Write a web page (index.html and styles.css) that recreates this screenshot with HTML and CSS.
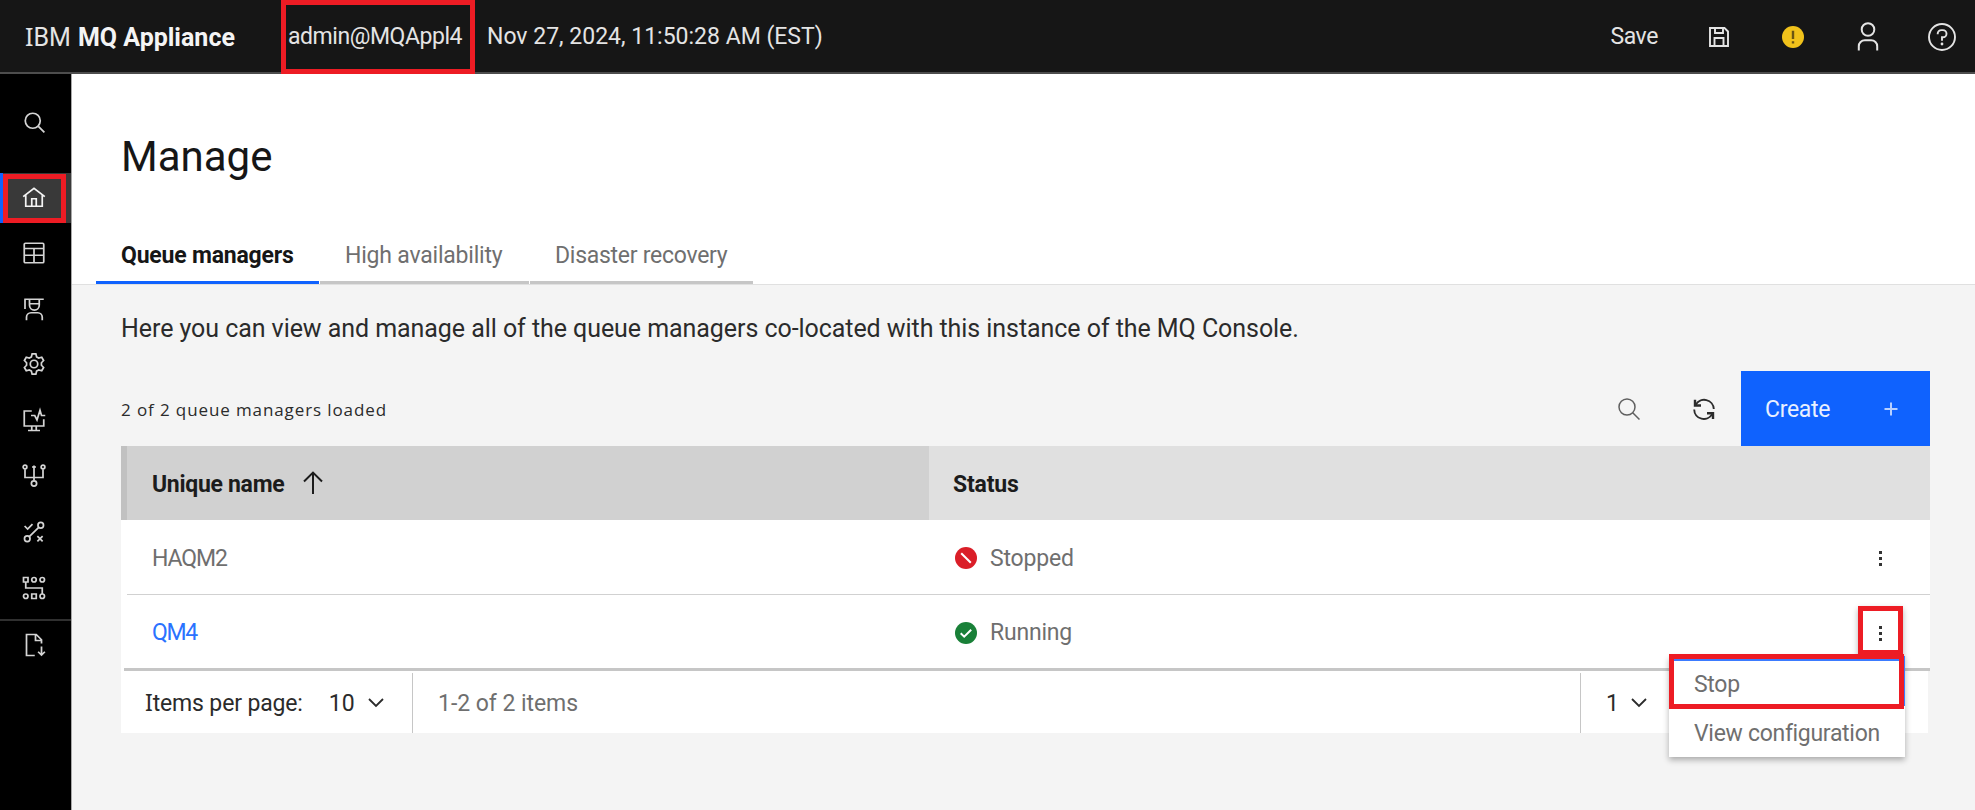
FILE: index.html
```html
<!DOCTYPE html>
<html lang="en">
<head>
<meta charset="utf-8">
<title>IBM MQ Appliance - Manage</title>
<link rel="stylesheet" href="styles.css">
</head>
<body>
<header class="topbar">
  <div class="brand"><span class="brand-ibm"><span class="slab">I</span>BM</span><b>MQ Appliance</b></div>
  <div class="user">admin@MQAppl4</div>
  <div class="clock">Nov 27, 2024, 11:50:28 AM (EST)</div>
  <div class="actions">
    <span class="save">Save</span>
    <svg class="i-floppy" viewBox="0 0 20 20"><path d="M1 1h14.5L19 4.500V19H1zM6 1v5h8V1M5.500 19v-8h9v8"/></svg>
    <svg class="i-warn" viewBox="0 0 22 22"><circle cx="11" cy="11" r="11"/><path d="M11 4.700v8.300M11 15.200v2.300"/></svg>
    <svg class="i-user" viewBox="0 0 22 29"><circle cx="11" cy="7.500" r="6.300"/><path d="M1.800 28.500v-4.300a6 6 0 0 1 6-6h6.400a6 6 0 0 1 6 6v4.300"/></svg>
    <svg class="i-help" viewBox="0 0 28 28"><circle cx="14" cy="14" r="13"/><path d="M9.700 11.300v-.6a3.600 3.600 0 0 1 3.600-3.600h1.600a3.600 3.600 0 0 1 0 7.200H14v3.400"/><circle class="dot" cx="14" cy="21" r="1.400"/></svg>
  </div>
  <div class="mark mark-user"></div>
</header>
<div class="shell">
  <nav class="rail">
    <a class="rail-search"><svg viewBox="0 0 32 32"><circle cx="13" cy="13" r="10"/><path d="M20.500 20.500l8 8"/></svg></a>
    <a class="rail-item active"><svg viewBox="0 0 32 32"><path d="M1.600 14.200L16 3l14.400 11.200M5 12v15h22V12M13 27V17h6v10"/></svg><span class="mark mark-home"></span></a>
    <a class="rail-item"><svg viewBox="0 0 32 32"><rect x="3" y="3" width="26" height="26" rx="1.500"/><path d="M3 10h26M3 19h26M16 10v19"/></svg></a>
    <a class="rail-item"><svg viewBox="0 0 32 32"><path d="M3 3h26M4 3v13M10 3v8a6.500 6.500 0 0 0 13 0V3M10 9h13M6 31v-4a6 6 0 0 1 6-6h9a6 6 0 0 1 6 6v4"/></svg></a>
    <a class="rail-item"><svg viewBox="0 0 32 32"><circle cx="16" cy="16" r="5"/><path d="M13.500 2.500h5l1 4 2.800 1.600 4-1.100 2.500 4.300-2.900 3v3.400l2.900 3-2.500 4.300-4-1.100-2.800 1.600-1 4h-5l-1-4-2.800-1.600-4 1.100-2.500-4.300 2.900-3v-3.400l-2.900-3L5.700 7l4 1.100 2.800-1.600z"/></svg></a>
    <a class="rail-item"><svg viewBox="0 0 32 32"><path d="M13 4H3v20h26V15M13 24v6M19 24v6M8 30h16M12 10h5l3 6 4-13 2 7h5"/></svg></a>
    <a class="rail-item"><svg viewBox="0 0 32 32"><circle cx="4" cy="4" r="2.500"/><circle cx="28" cy="4" r="2.500"/><path d="M4 7v11h24V7M16 2v20"/><path d="M13.500 4h5"/><circle cx="16" cy="26" r="3.500"/></svg></a>
    <a class="rail-item"><svg viewBox="0 0 32 32"><circle cx="25" cy="7" r="3.700"/><circle cx="7" cy="25" r="3.700"/><path d="M9.700 22.300L22.300 9.700M3.500 8l4 4L14 5.500M20.500 21.500l7 7M27.500 21.500l-7 7"/></svg></a>
    <a class="rail-item"><svg viewBox="0 0 32 32"><path d="M2 2h6v6H2zM13 24h6v6h-6zM5 8v8h22v8"/><circle cx="16" cy="5" r="3"/><circle cx="27" cy="5" r="3"/><circle cx="5" cy="27" r="3"/><circle cx="27" cy="27" r="3"/></svg></a>
    <a class="rail-item rail-last"><svg viewBox="0 0 32 32"><path d="M17 30H6V2h13l7 7v5M18 2v8h8M26 18v11M21.500 25l4.500 4.500 4.500-4.500"/></svg></a>
  </nav>
  <main class="page">
    <section class="head">
      <h1>Manage</h1>
      <div class="tabs">
        <a class="tab tab-q selected">Queue managers</a>
        <a class="tab tab-h">High availability</a>
        <a class="tab tab-d">Disaster recovery</a>
      </div>
    </section>
    <section class="body">
      <p class="intro">Here you can view and manage all of the queue managers co-located with this instance of the MQ Console.</p>
      <div class="toolbar">
        <span class="loaded">2 of 2 queue managers loaded</span>
        <svg class="i-search" viewBox="0 0 22 22"><circle cx="9" cy="9" r="8"/><path d="M14.700 14.700l6.800 6.800"/></svg>
        <svg class="i-refresh" viewBox="0 0 22 22"><path d="M2.800 6.800A9.600 9.600 0 0 1 20.800 11M1.200 11.500A9.600 9.600 0 0 0 19.200 16"/><path class="head-arrow" d="M2 1.800V7.500H8M20 21v-5.800H14"/></svg>
        <div class="create"><span>Create</span><svg viewBox="0 0 14 14"><path d="M7 .5v13M.5 7h13"/></svg></div>
      </div>
      <div class="table">
        <div class="thead">
          <div class="th th-name">Unique name<svg viewBox="0 0 20 24"><path d="M10 23V2M1 10.500L10 1.600l9 8.900"/></svg></div>
          <div class="th th-status">Status</div>
        </div>
        <div class="row">
          <div class="c-name">HAQM2</div>
          <div class="c-status"><svg viewBox="0 0 22 22"><circle cx="11" cy="11" r="11" fill="#da1e28"/><path d="M6.200 6.200l9.600 9.600"/></svg>Stopped</div>
          <div class="dots"><i></i><i></i><i></i></div>
        </div>
        <div class="row row-last">
          <div class="c-name link">QM4</div>
          <div class="c-status"><svg viewBox="0 0 22 22"><circle cx="11" cy="11" r="11" fill="#198038"/><path d="M5.700 11.300l3.500 3.400 7-6.900"/></svg>Running</div>
          <div class="dots open"><i></i><i></i><i></i>
            <div class="mark mark-dots"></div>
            <div class="menu">
              <div class="menu-item focus">Stop</div>
              <div class="menu-item">View configuration</div>
              <div class="mark mark-stop"></div>
            </div>
          </div>
        </div>
        <div class="pager">
          <div class="per-page"><span class="per-label"><span class="slab">I</span>tems per page:</span><span class="num">10</span><svg viewBox="0 0 16 10"><path d="M1 1l7 7 7-7"/></svg></div>
          <div class="range">1-2 of 2 items</div>
          <div class="page-no"><span>1</span><svg viewBox="0 0 16 10"><path d="M1 1l7 7 7-7"/></svg></div>
        </div>
      </div>
    </section>
  </main>
</div>
</body>
</html>
```
FILE: styles.css
```css
* { box-sizing: border-box; }
body {
  margin: 0;
  width: 1975px;
  height: 810px;
  overflow: hidden;
  display: flex;
  flex-direction: column;
  font-family: Roboto, "Liberation Sans", sans-serif;
  font-size: 23px;
  color: #2b2b2b;
  background: #f4f4f4;
  white-space: nowrap;
}
svg { flex: none; fill: none; stroke: currentColor; overflow: visible; }
.slab { font-family: "Noto Sans", sans-serif; line-height: 1; }

/* red highlight frames */
.mark { position: absolute; border: 5px solid #ed1c24; z-index: 5; }

/* top bar */
.topbar {
  position: relative;
  flex: none;
  height: 74px;
  display: flex;
  align-items: center;
  padding-left: 25px;
  background: #161616;
  border-bottom: 2px solid #4d4d4d;
  color: #e4e4e4;
}
.brand { width: 263px; display: flex; align-items: baseline; gap: 7px; padding-top: 2px; font-size: 25px; }
.brand b { color: #f4f4f4; }
.user { width: 199px; padding-top: 1px; letter-spacing: -.45px; }
.clock { padding-top: 1px; letter-spacing: 0; }
.mark-user { left: 281px; top: 0; width: 194px; height: 74px; }
.actions { margin-left: auto; display: flex; align-items: center; padding: 1px 19px 0 0; stroke-width: 1.6; }
.save { letter-spacing: -.4px; margin-right: 51px; }
.i-floppy { width: 20px; height: 20px; margin-right: 53px; stroke-width: 1.9; }
.i-warn { width: 22px; height: 22px; margin-right: 53px; }
.i-warn circle { fill: #f1c21b; stroke: none; }
.i-warn path { stroke: #6b5512; stroke-width: 2.4; }
.i-user { width: 22px; height: 29px; margin-right: 49px; stroke-width: 2; }
.i-help { width: 28px; height: 28px; stroke-width: 1.9; }
.i-help .dot { fill: currentColor; stroke: none; }

/* side rail */
.shell { flex: 1; display: flex; min-height: 0; }
.rail {
  width: 72px;
  flex: none;
  display: flex;
  flex-direction: column;
  background: #000;
  border-right: 1px solid #a8a8a8;
  color: #d4d4d4;
}
.rail svg { width: 24px; height: 24px; stroke-width: 2.3; }
.rail-search { height: 99px; padding: 37px 0 0 23px; }
.rail-item { position: relative; height: 55.8px; padding-left: 22px; display: flex; align-items: center; }
.rail-item.active { height: 50px; margin-bottom: 2px; background: #393939; border-left: 3px solid #0f62fe; padding: 0 0 1px 19px; color: #f4f4f4; }
.mark-home { left: 0; top: 1px; width: 63px; height: 49px; }
.rail-last { border-top: 2px solid #303030; margin-top: 3px; height: 50px; }

/* page head */
.page { flex: 1; display: flex; flex-direction: column; }
.head {
  height: 211px;
  display: flex;
  flex-direction: column;
  justify-content: space-between;
  padding-left: 24px;
  background: #fff;
  border-bottom: 1px solid #e0e0e0;
}
h1 { margin: 58px 0 0 25px; font-size: 42px; line-height: 50px; font-weight: 400; letter-spacing: 0; color: #161616; }
.tabs { display: flex; gap: 1px; }
.tab { height: 54px; padding: 13px 0 0 25px; line-height: 26px; border-bottom: 3px solid #c6c6c6; color: #6f6f6f; letter-spacing: -.2px; }
.tab-q { width: 223px; }
.tab-h { width: 209px; }
.tab-d { width: 223px; letter-spacing: -.27px; }
.tab.selected { border-color: #0f62fe; color: #161616; font-weight: 700; letter-spacing: -.2px; }

/* toolbar */
.body { padding: 0 45px 0 49px; }
.intro { margin: 0; padding-top: 27px; height: 86px; font-size: 25px; line-height: 33px; letter-spacing: -.06px; }
.toolbar { height: 75px; display: flex; align-items: center; color: #2b2b2b; }
.loaded { width: 1497px; padding-top: 2px; font-family: "Open Sans", Roboto, sans-serif; font-size: 17px; letter-spacing: .89px; }
.i-search { width: 22px; height: 22px; margin-right: 53px; stroke: #5f5f5f; stroke-width: 1.5; }
.i-refresh { width: 22px; height: 22px; margin-right: 26px; stroke-width: 1.9; }
.i-refresh .head-arrow { stroke-width: 2.4; }
.create { width: 189px; height: 75px; display: flex; align-items: center; padding: 2px 32px 0 24px; justify-content: space-between; background: #0f62fe; color: #e9f0ff; letter-spacing: -.3px; }
.create svg { width: 14px; height: 14px; margin-bottom: 2px; stroke-width: 2; stroke: #b8d0ff; }

/* table */
.thead { display: flex; height: 74px; font-weight: 700; color: #1c1c1c; }
.th { display: flex; align-items: center; padding-top: 2px; }
.th-name { width: 808px; padding-left: 25px; background: #d1d1d1; border-left: 6px solid #c1c1c1; letter-spacing: -.3px; }
.th-name svg { width: 20px; height: 24px; margin: 0 0 3px 19px; stroke-width: 2; }
.th-status { flex: 1; padding-left: 24px; background: #e0e0e0; letter-spacing: -.2px; }
.row { position: relative; display: flex; align-items: center; height: 75px; padding: 1px 48px 0 31px; background: #fff; color: #6f6f6f; }
.row::after { content: ""; position: absolute; left: 6px; right: 0; bottom: -1px; height: 2px; background: #d1d1d1; }
.row-last::after { left: 3px; bottom: -2px; height: 3px; background: #c6c6c6; }
.c-name { width: 803px; letter-spacing: -1.1px; }
.link { color: #2a72ff; letter-spacing: -1.3px; }
.c-status { display: flex; align-items: center; gap: 13px; letter-spacing: -.2px; }
.c-status svg { width: 22px; height: 22px; stroke: #fff; stroke-width: 2; }
.c-status circle { stroke: none; }
.dots { position: relative; margin-left: auto; width: 3px; display: flex; flex-direction: column; gap: 3px; z-index: 2; }
.dots i { width: 3px; height: 3px; background: #333; }
.row-last { height: 74px; }
.dots.open { width: 45px; height: 52px; padding: 19px 0 0 21px; margin: 0 -21px 0 auto; background: #fff; box-shadow: 0 2px 6px rgba(0,0,0,.3); }
.mark-dots { left: 0; top: -1px; width: 45px; height: 49px; }

/* overflow menu */
.menu { position: absolute; top: 49px; right: -2px; width: 236px; height: 101px; background: #fff; box-shadow: 0 3px 6px rgba(0,0,0,.3); }
.menu-item { height: 50px; padding-left: 25px; line-height: 55px; letter-spacing: -.3px; }
.menu-item.focus { border: solid #3b7bff; border-width: 5px 3px 0 0; line-height: 47px; }
.mark-stop { left: 0; top: -2px; width: 235px; height: 55px; }

/* pager */
.pager { display: flex; height: 64px; padding-top: 4px; margin-right: 2px; background: #fff; }
.pager > div { display: flex; align-items: center; box-shadow: 0 -4px 0 #fff; }
.pager svg { width: 16px; height: 10px; stroke-width: 1.8; }
.per-page { width: 292px; padding-left: 24px; border-right: 1px solid #c6c6c6; }
.per-label { letter-spacing: -.15px; }
.num { margin: 0 13px 0 26px; }
.range { width: 1167px; padding-left: 25px; color: #6f6f6f; letter-spacing: -.05px; }
.page-no { border-left: 1px solid #c6c6c6; padding-left: 25px; gap: 12px; }
```
